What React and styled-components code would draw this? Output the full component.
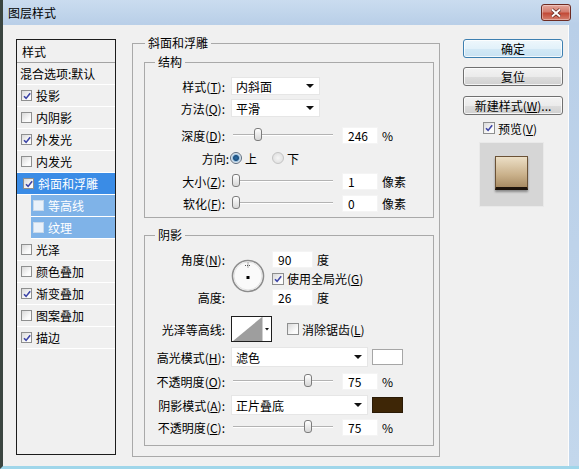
import React from "react";
import styled, { createGlobalStyle } from "styled-components";

const GlobalStyle = createGlobalStyle`
  html, body { margin: 0; padding: 0; background: #2f3a33; }
  body {
    font-family: "Noto Sans CJK SC", "Noto Sans", "DejaVu Sans", sans-serif;
    font-size: 12px;
    color: #000;
  }
  * { box-sizing: border-box; }
`;

// Window frame
const Window = styled.div`
  width: 579px;
  height: 469px;
  display: flex;
  flex-direction: column;
  background: linear-gradient(#cadcef, #b9cfe8 24px, #c3d7ec);
  border-left: 3px solid #3a4540;
  border-bottom: 3px solid #9fd6ea;
  overflow: hidden;
`;

const TitleBar = styled.div`
  height: 25px;
  flex-shrink: 0;
  display: flex;
  align-items: center;
  padding: 0 8px 0 5px;
  font-size: 12px;
  line-height: 16px;
`;

const CloseButton = styled.div`
  margin-left: auto;
  width: 30px;
  height: 17px;
  border: 1px solid #6e2b22;
  border-radius: 3px;
  background: linear-gradient(#e4a79c 0%, #d37d6f 45%, #c24a37 55%, #d5806f 100%);
  box-shadow: inset 0 0 0 1px rgba(255, 255, 255, 0.35);
  display: flex;
  align-items: center;
  justify-content: center;
`;

const Body = styled.div`
  flex: 1;
  display: flex;
  align-items: flex-start;
  margin-right: 10px;
  padding: 10px 5px 0 13px;
  background: #f0f0f0;
  border-right: 1px solid #fdfdfd;
`;

// Left style list
const StyleList = styled.div`
  width: 100px;
  height: 416px;
  margin-top: 4px;
  flex-shrink: 0;
  border: 1px solid #1c1c1c;
  background: #f0f0f0;
`;

const ListHeader = styled.div`
  height: 23px;
  padding-left: 5px;
  display: flex;
  align-items: center;
  border-bottom: 1px solid #a3a3a3;
`;

const ListItem = styled.div`
  height: 22px;
  display: flex;
  align-items: center;
  white-space: nowrap;
  border-bottom: 1px solid #fff;
  margin-left: ${(p) => (p.$sub ? 14 : 0)}px;
  padding-left: ${(p) => (p.$plain ? 3 : p.$sub ? 2 : p.$selected ? 6 : 4)}px;
  background: ${(p) => (p.$selected ? "#3a8ce6" : p.$sub ? "#7fb3e8" : "transparent")};
  color: ${(p) => (p.$selected || p.$sub ? "#fff" : "#000")};
`;

const Box = styled.span`
  width: ${(p) => p.$size || 11}px;
  height: ${(p) => p.$size || 11}px;
  flex-shrink: 0;
  margin-right: ${(p) => (p.$mr === undefined ? 4 : p.$mr)}px;
  margin-left: ${(p) => p.$ml || 0}px;
  border: 1px solid ${(p) => (p.$faded ? "#c9d9ea" : "#8e8f8f")};
  background: ${(p) =>
    p.$faded ? "#e9f1fa" : "linear-gradient(135deg, #d9d9d9, #fbfbfb 70%)"};
  display: inline-flex;
  align-items: center;
  justify-content: center;
`;

function CheckBox({ checked, size, mr, ml, faded }) {
  return (
    <Box $size={size} $mr={mr} $ml={ml} $faded={faded}>
      {checked && (
        <svg width="8" height="8" viewBox="0 0 8 8">
          <path d="M1 4.2 L3.1 6.4 L7.2 1.2" stroke="#3c44a6" strokeWidth="1.6" fill="none" />
        </svg>
      )}
    </Box>
  );
}

// Groups
const Group = styled.fieldset`
  margin: ${(p) => p.$mt || 0}px 0 0 0;
  padding: ${(p) => p.$pad};
  border: 1px solid #a9a9a9;
  min-width: 0;
`;

const MainGroup = styled(Group)`
  width: 308px;
  margin-left: 16px;
  flex-shrink: 0;
`;

const Legend = styled.legend`
  margin-left: ${(p) => p.$ml}px;
  padding: 0 3px;
  line-height: 16px;
  font-size: 12px;
`;

const Row = styled.div`
  display: flex;
  align-items: center;
  height: ${(p) => p.$h || 22}px;
  margin-top: ${(p) => p.$mt || 0}px;
  white-space: nowrap;
`;

const Label = styled.span`
  width: ${(p) => p.$w || 80}px;
  margin-right: ${(p) => (p.$gap === undefined ? 6 : p.$gap)}px;
  flex-shrink: 0;
  text-align: right;
  white-space: nowrap;
`;

const Key = styled.span`
  text-decoration: underline;
`;

const Select = styled.div`
  width: ${(p) => p.$w}px;
  height: ${(p) => p.$h || 18}px;
  background: #fff;
  border: 1px solid #e6e6e6;
  display: flex;
  align-items: center;
  justify-content: space-between;
  padding: 0 4px 0 4px;
  &::after {
    content: "";
    border-left: 4px solid transparent;
    border-right: 4px solid transparent;
    border-top: 4px solid #111;
    margin-right: 1px;
  }
`;

const Slider = styled.div`
  position: relative;
  width: 100px;
  height: 14px;
  margin-left: 2px;
  flex-shrink: 0;
  &::before {
    content: "";
    position: absolute;
    left: 0;
    right: 0;
    top: 6px;
    height: 1px;
    background: #b3b3b3;
    box-shadow: 0 1px 0 #fff;
  }
`;

const Thumb = styled.span`
  position: absolute;
  top: 0;
  left: ${(p) => p.$pos - 4}px;
  width: 8px;
  height: 13px;
  border: 1px solid #7c7c7c;
  border-radius: 3px;
  background: linear-gradient(#ffffff, #d6d6d6);
`;

const NumBox = styled.div`
  width: ${(p) => p.$w || 36}px;
  height: 17px;
  margin-left: ${(p) => (p.$ml === undefined ? 9 : p.$ml)}px;
  padding-left: 5px;
  background: #fff;
  border: 1px solid #f4f4f4;
  display: flex;
  align-items: center;
  flex-shrink: 0;
`;

const Unit = styled.span`
  margin-left: 4px;
`;

const Radio = styled.span`
  width: 12px;
  height: 12px;
  border-radius: 50%;
  flex-shrink: 0;
  margin: 0 3px 0 ${(p) => p.$ml || 0}px;
  border: 1px solid ${(p) => (p.$on ? "#5d6d80" : "#c4c4c4")};
  background: ${(p) =>
    p.$on
      ? "radial-gradient(circle, #2a6fa8 0, #1d4f7e 2.5px, #9fc3e0 3.5px, #f4f4f4 5px)"
      : "radial-gradient(circle, #f6f6f6 0, #e2e2e2 5px)"};
`;

const AngleGrid = styled.div`
  display: grid;
  grid-template-columns: 86px 41px 1fr;
  grid-template-rows: 19px 19px 19px;
  align-items: center;
  margin-top: 7px;
  white-space: nowrap;
`;

const GridLabel = styled.span`
  grid-column: 1;
  grid-row: ${(p) => p.$row};
  text-align: right;
  padding-right: 6px;
`;

const GridCell = styled.div`
  grid-column: 3;
  grid-row: ${(p) => p.$row};
  display: flex;
  align-items: center;
`;

const DialWrap = styled.div`
  grid-column: 2;
  grid-row: 1 / span 3;
  align-self: start;
  margin-top: 9px;
  width: 34px;
  height: 34px;
`;

const ContourBox = styled.div`
  width: 41px;
  height: 26px;
  margin-right: 15px;
  border: 1px solid #1e1e1e;
  background: #fff;
  flex-shrink: 0;
`;

const Swatch = styled.div`
  width: 31px;
  height: 16px;
  margin-left: 4px;
  border: 1px solid ${(p) => (p.$dark ? "#2a1a06" : "#a6a6a6")};
  background: ${(p) => p.$color};
`;

// Right column
const Side = styled.div`
  width: 100px;
  margin-left: 23px;
  padding-top: 4px;
  flex-shrink: 0;
  display: flex;
  flex-direction: column;
`;

const Button = styled.div`
  height: 19px;
  margin-top: ${(p) => p.$mt || 0}px;
  display: flex;
  align-items: center;
  justify-content: center;
  border: 1px solid ${(p) => (p.$default ? "#3d7fb0" : "#707070")};
  border-radius: 3px;
  background: ${(p) =>
    p.$default
      ? "linear-gradient(#eef7fc 0%, #e2f1fa 50%, #d3e9f6 51%, #c8e2f2 100%)"
      : "linear-gradient(#f3f3f3 0%, #ebebeb 50%, #dddddd 51%, #d0d0d0 100%)"};
  box-shadow: inset 0 0 0 1px rgba(255, 255, 255, 0.75);
  white-space: nowrap;
`;

const PreviewToggle = styled.div`
  height: 16px;
  margin-top: 5px;
  padding-left: 20px;
  display: flex;
  align-items: center;
`;

const PreviewBox = styled.div`
  width: 65px;
  height: 65px;
  margin: 6px 0 0 16px;
  background: #d6d6d6;
  border: 1px solid #e9e9e9;
  display: flex;
  align-items: center;
  justify-content: center;
  padding-bottom: 3px;
`;

const PreviewSquare = styled.div`
  width: 33px;
  height: 34px;
  background: linear-gradient(#ecdfc6, #c9b08a 60%, #a88b63);
  border: 1px solid #6b5236;
  border-bottom: 3px solid #1d130b;
  box-shadow: 0 2px 2px rgba(0, 0, 0, 0.35);
`;

const listItems = [
  { name: "投影", checked: true },
  { name: "内阴影" },
  { name: "外发光", checked: true },
  { name: "内发光" },
  { name: "斜面和浮雕", checked: true, selected: true },
  { name: "等高线", sub: true },
  { name: "纹理", sub: true },
  { name: "光泽" },
  { name: "颜色叠加" },
  { name: "渐变叠加", checked: true },
  { name: "图案叠加" },
  { name: "描边", checked: true },
];

function SliderRow({ label, k, pos, value, unit, mt }) {
  return (
    <Row $mt={mt}>
      <Label>
        {label}(<Key>{k}</Key>):
      </Label>
      <Slider>
        <Thumb $pos={pos} />
      </Slider>
      <NumBox>{value}</NumBox>
      <Unit>{unit}</Unit>
    </Row>
  );
}

export default function App() {
  return (
    <>
      <GlobalStyle />
      <Window>
        <TitleBar>
          图层样式
          <CloseButton>
            <svg width="12" height="10" viewBox="0 0 12 10">
              <path d="M2 1.5 L10 8.5 M10 1.5 L2 8.5" stroke="#5a1e17" strokeWidth="3.4" />
              <path d="M2 1.5 L10 8.5 M10 1.5 L2 8.5" stroke="#fff" strokeWidth="2" />
            </svg>
          </CloseButton>
        </TitleBar>
        <Body>
          <StyleList>
            <ListHeader>样式</ListHeader>
            <ListItem $plain>混合选项:默认</ListItem>
            {listItems.map((it) => (
              <ListItem key={it.name} $selected={it.selected} $sub={it.sub}>
                <CheckBox checked={it.checked} faded={it.sub} />
                {it.name}
              </ListItem>
            ))}
          </StyleList>

          <MainGroup $pad="3px 5px 10px 11px">
            <Legend $ml={1}>斜面和浮雕</Legend>
            <Group $pad="5px 0 3px 0">
              <Legend $ml={10}>结构</Legend>
              <Row>
                <Label>
                  样式(<Key>T</Key>):
                </Label>
                <Select $w={89}>内斜面</Select>
              </Row>
              <Row>
                <Label>
                  方法(<Key>Q</Key>):
                </Label>
                <Select $w={89}>平滑</Select>
              </Row>
              <SliderRow label="深度" k="D" pos={25} value="246" unit="%" mt={5} />
              <Row $mt={1}>
                <Label $w={84} $gap={1}>
                  方向:
                </Label>
                <Radio $on />上
                <Radio $ml={15} />下
              </Row>
              <SliderRow label="大小" k="Z" pos={3} value="1" unit="像素" mt={1} />
              <SliderRow label="软化" k="F" pos={3} value="0" unit="像素" />
            </Group>

            <Group $mt={9} $pad="0 0 7px 0">
              <Legend $ml={10}>阴影</Legend>
              <AngleGrid>
                <GridLabel $row={1}>
                  角度(<Key>N</Key>):
                </GridLabel>
                <DialWrap>
                  <svg width="34" height="34" viewBox="0 0 34 34">
                    <circle cx="17" cy="17" r="15.5" fill="#fafafa" stroke="#8c8c8c" strokeWidth="1.6" />
                    <circle cx="17" cy="17" r="14" fill="none" stroke="#e2e2e2" strokeWidth="1" />
                    <path d="M17 3.5 V9.5 M14 6.5 H20" stroke="#333" strokeWidth="0.8" strokeDasharray="1 1" />
                    <rect x="15.5" y="17" width="3" height="3" fill="#000" />
                  </svg>
                </DialWrap>
                <GridCell $row={1}>
                  <NumBox $w={41} $ml={0}>90</NumBox>
                  <Unit>度</Unit>
                </GridCell>
                <GridCell $row={2}>
                  <CheckBox checked size={12} mr={3} />
                  使用全局光(<Key>G</Key>)
                </GridCell>
                <GridLabel $row={3}>高度:</GridLabel>
                <GridCell $row={3}>
                  <NumBox $w={41} $ml={0}>26</NumBox>
                  <Unit>度</Unit>
                </GridCell>
              </AngleGrid>

              <Row $h={26} $mt={9}>
                <Label>光泽等高线:</Label>
                <ContourBox>
                  <svg width="39" height="24" viewBox="0 0 39 24">
                    <polygon points="1,24 30,0 30,24" fill="#9e9e9e" />
                    <line x1="30.5" y1="0" x2="30.5" y2="24" stroke="#cfcfcf" />
                    <polygon points="33,11 37,11 35,13.5" fill="#111" />
                  </svg>
                </ContourBox>
                <CheckBox size={12} mr={3} />
                消除锯齿(<Key>L</Key>)
              </Row>

              <Row $mt={4}>
                <Label>
                  高光模式(<Key>H</Key>):
                </Label>
                <Select $w={137} $h={20}>滤色</Select>
                <Swatch $color="#ffffff" />
              </Row>
              <SliderRow label="不透明度" k="O" pos={75} value="75" unit="%" mt={2} />
              <Row $mt={2}>
                <Label>
                  阴影模式(<Key>A</Key>):
                </Label>
                <Select $w={137} $h={20}>正片叠底</Select>
                <Swatch $color="#3e2606" $dark />
              </Row>
              <SliderRow label="不透明度" k="C" pos={75} value="75" unit="%" />
            </Group>
          </MainGroup>

          <Side>
            <Button $default>确定</Button>
            <Button $mt={9}>复位</Button>
            <Button $mt={10}>
              新建样式(<Key>W</Key>)...
            </Button>
            <PreviewToggle>
              <CheckBox checked size={12} mr={3} />
              预览(<Key>V</Key>)
            </PreviewToggle>
            <PreviewBox>
              <PreviewSquare />
            </PreviewBox>
          </Side>
        </Body>
      </Window>
    </>
  );
}
